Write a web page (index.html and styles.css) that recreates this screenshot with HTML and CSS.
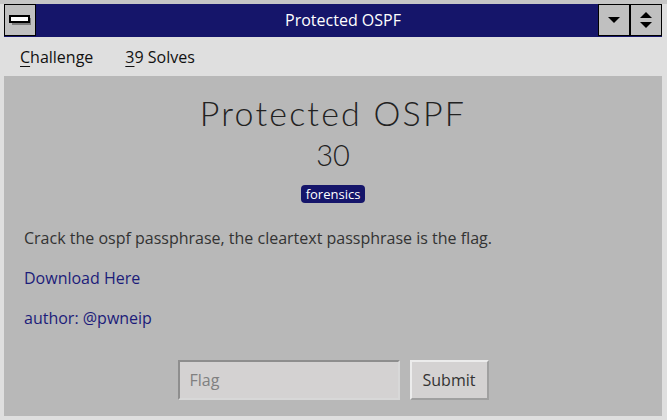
FILE: index.html
```html
<!DOCTYPE html>
<html lang="en">
<head>
  <meta charset="UTF-8">
  <title>Protected OSPF</title>
  <link rel="stylesheet" href="styles.css">
</head>
<body>
<div class="window">
  <div class="titlebar">
    <div class="tb-btn tb-min">
      <svg width="22" height="10" viewBox="0 0 22 10">
        <rect x="3" y="3" width="19" height="7" fill="#7a7a7a"/>
        <rect x="1" y="1" width="19" height="6" fill="#fff" stroke="#000" stroke-width="2"/>
      </svg>
    </div>
    <div class="tb-title">Protected OSPF</div>
    <div class="tb-btn">
      <svg width="14" height="10" viewBox="0 0 14 10">
        <path d="M1 2 H13 L7 8 Z" fill="#000"/>
      </svg>
    </div>
    <div class="tb-btn">
      <svg width="14" height="20" viewBox="0 0 14 20">
        <path d="M1 8 H13 L7 2 Z" fill="#000"/>
        <path d="M1 12 H13 L7 18 Z" fill="#000"/>
      </svg>
    </div>
  </div>
  <div class="menubar">
    <span class="menu-item"><u>C</u>hallenge</span>
    <span class="menu-item"><u>3</u>9 Solves</span>
  </div>
  <div class="panel">
    <h1 class="chal-name">Protected OSPF</h1>
    <div class="chal-value">30</div>
    <div class="tags"><span class="badge">forensics</span></div>
    <div class="desc">
      <p>Crack the ospf passphrase, the cleartext passphrase is the flag.</p>
      <p><a href="#">Download Here</a></p>
      <p class="author">author: @pwneip</p>
    </div>
    <form class="submit-row">
      <input type="text" class="flag-input" placeholder="Flag">
      <button type="button" class="submit-btn">Submit</button>
    </form>
  </div>
</div>
</body>
</html>
```

FILE: styles.css
```css
html, body {
  margin: 0;
  padding: 0;
}
body {
  background: #dfdfdf;
  border-top: 4px solid #c6c6c6;
  font-family: "Open Sans", sans-serif;
  color: #333;
  width: 667px;
  height: 416px;
  overflow: hidden;
}
.window {
  margin: 0 5px 0 4px;
}
.titlebar {
  display: flex;
  height: 32px;
  background: #15156a;
  border-bottom: 1px solid #15156a;
}
.tb-btn {
  width: 30px;
  height: 30px;
  background: #c0c0c0;
  border: 1px solid #000;
  display: flex;
  align-items: center;
  justify-content: center;
}
.tb-title {
  flex: 1;
  color: #fff;
  font-size: 16px;
  text-align: center;
  line-height: 32px;
  padding-left: 52px;
}
.menubar {
  height: 39px;
  display: flex;
  align-items: center;
  padding-left: 16px;
  gap: 32px;
  font-size: 16px;
  color: #111;
}
.menu-item u {
  text-decoration-thickness: 1px;
  text-underline-offset: 3px;
}
.panel {
  background: #b8b8b8;
  height: 340px;
  padding: 0 20px;
}
.chal-name {
  margin: 0;
  padding-top: 16px;
  font-family: Lato, sans-serif;
  font-weight: 300;
  font-size: 34px;
  letter-spacing: 2.2px;
  line-height: 42px;
  text-align: center;
  color: #222;
}
.chal-value {
  font-family: Lato, sans-serif;
  font-weight: 300;
  font-size: 29px;
  line-height: 34px;
  text-align: center;
  color: #222;
  margin-top: 4px;
}
.tags {
  text-align: center;
  margin-top: 10px;
}
.badge {
  display: inline-block;
  background: #15156a;
  color: #fff;
  font-size: 13px;
  line-height: 18px;
  padding: 0 5px;
  border-radius: 4px;
}
.desc {
  margin-top: 22px;
  font-size: 16px;
}
.desc p {
  margin: 0 0 16px;
  line-height: 24px;
}
.desc a, .author {
  color: #1c1c7a;
  text-decoration: none;
}
.submit-row {
  display: flex;
  justify-content: center;
  gap: 10px;
  margin-top: 30px;
}
.flag-input {
  width: 222px;
  box-sizing: border-box;
  height: 40px;
  background: #d4d2d2;
  border: 2px solid;
  border-color: #8e8e8e #d8d8d8 #d8d8d8 #8e8e8e;
  font-family: "Open Sans", sans-serif;
  font-size: 16px;
  padding: 0 10px;
  color: #333;
}
.flag-input::placeholder {
  color: #808080;
}
.submit-btn {
  width: 79px;
  height: 40px;
  background: #d4d2d2;
  border: 2px solid;
  border-color: #ececec #a0a0a0 #a0a0a0 #ececec;
  font-family: "Open Sans", sans-serif;
  font-size: 16px;
  color: #333;
  padding: 0;
}
```
